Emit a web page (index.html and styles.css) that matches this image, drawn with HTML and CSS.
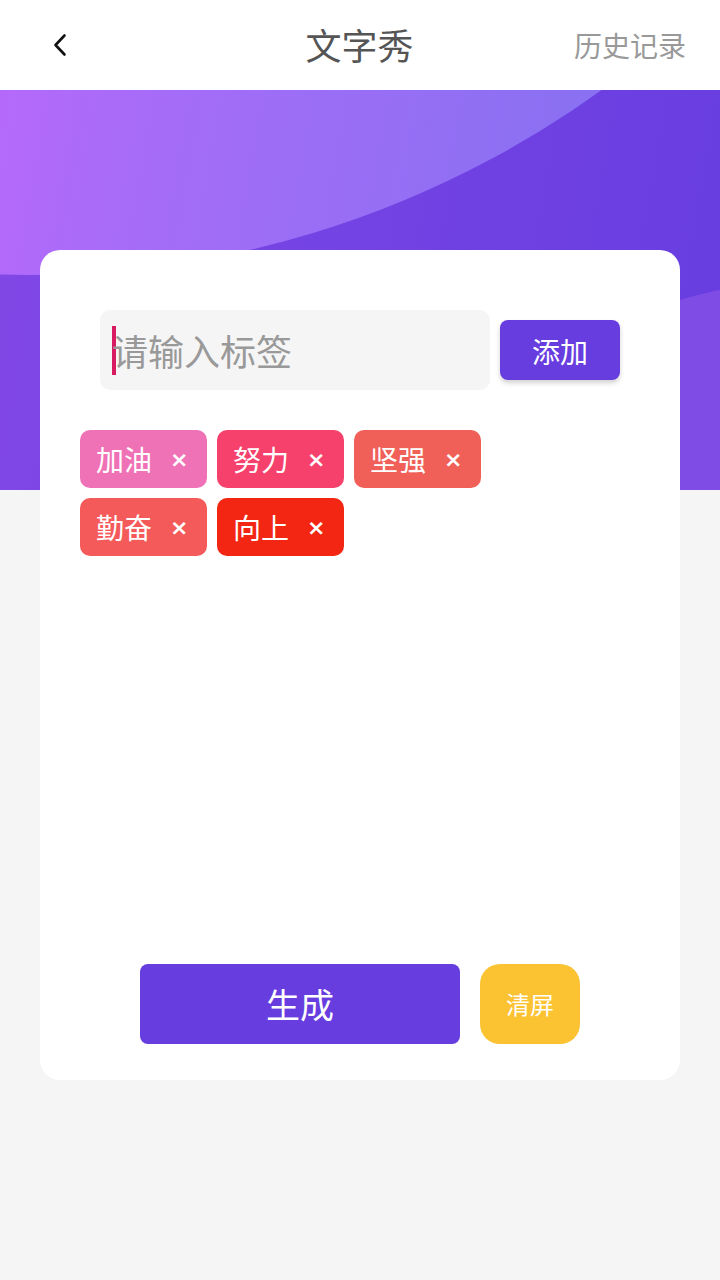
FILE: index.html
```html
<!DOCTYPE html>
<html lang="zh">
<head>
<meta charset="utf-8">
<title>文字秀</title>
<link rel="stylesheet" href="styles.css">
</head>
<body>
<header class="topbar">
  <div class="back">
    <svg width="24" height="24" viewBox="0 0 24 24"><path d="M15.5 2.5 L6.5 12 L15.5 21.5" fill="none" stroke="#111" stroke-width="2.6" stroke-linecap="round" stroke-linejoin="round"/></svg>
  </div>
  <div class="title">文字秀</div>
  <div class="history">历史记录</div>
</header>
<section class="hero">
  <div class="blob blob-a"></div>
  <div class="blob blob-b"></div>
</section>
<main class="card">
  <div class="input-row">
    <div class="input"><span class="caret"></span><span class="placeholder">请输入标签</span></div>
    <button class="add">添加</button>
  </div>
  <div class="tags">
    <div class="tag t1"><span class="tag-text">加油</span><span class="x">×</span></div>
    <div class="tag t2"><span class="tag-text">努力</span><span class="x">×</span></div>
    <div class="tag t3"><span class="tag-text">坚强</span><span class="x">×</span></div>
    <div class="tag t4"><span class="tag-text">勤奋</span><span class="x">×</span></div>
    <div class="tag t5"><span class="tag-text">向上</span><span class="x">×</span></div>
  </div>
  <div class="actions">
    <button class="gen">生成</button>
    <button class="clear">清屏</button>
  </div>
</main>
</body>
</html>
```
FILE: styles.css
```css
* { box-sizing: border-box; }
html, body { margin: 0; padding: 0; }
body {
  width: 720px;
  height: 1280px;
  background: #f5f5f5;
  font-family: "Noto Sans CJK SC", "Noto Sans", sans-serif;
  overflow: hidden;
}
.topbar {
  height: 90px;
  background: #fff;
  display: flex;
  align-items: center;
  position: relative;
  padding: 0 34px 0 49px;
}
.back { width: 24px; height: 24px; display: flex; }
.title {
  flex: 1;
  text-align: center;
  font-size: 36px;
  color: #555;
  line-height: 1;
  margin-left: 72px;
  padding-bottom: 2px;
}
.history {
  font-size: 28px;
  color: #999;
  line-height: 1;
}
.hero {
  height: 400px;
  position: relative;
  overflow: hidden;
  background: linear-gradient(100deg, #8248e6 0%, #7443e3 45%, #673de0 100%);
}
.blob { position: absolute; border-radius: 50%; }
.blob-a {
  width: 1950px;
  height: 1950px;
  left: -945px;
  top: -1765px;
  background: linear-gradient(100deg, #c466fc 48%, #a56cf8 62%, #8a70f2 80%);
}
.blob-b {
  width: 1660px;
  height: 1660px;
  left: 70px;
  top: 180px;
  background: #7f4ce6;
}
.card {
  position: relative;
  margin: -240px 40px 0;
  height: 830px;
  background: #fff;
  border-radius: 20px;
  padding: 60px 0 36px;
  display: flex;
  flex-direction: column;
}
.input-row {
  display: flex;
  align-items: center;
  gap: 10px;
  padding: 0 60px;
}
.input {
  width: 390px;
  height: 80px;
  background: #f5f5f5;
  border-radius: 10px;
  display: flex;
  align-items: center;
  padding-left: 12px;
}
.caret {
  width: 4px;
  height: 49px;
  background: #d81b60;
}
.placeholder {
  font-size: 36px;
  color: #999;
  line-height: 1;
  margin-left: -4px;
}
.add {
  width: 120px;
  height: 60px;
  border: none;
  border-radius: 8px;
  background: #673de0;
  color: #fff;
  font-family: inherit;
  font-size: 28px;
  line-height: 1;
  padding: 2px 0 0;
  box-shadow: 0 3px 5px rgba(0,0,0,0.18);
}
.tags {
  flex: 1;
  margin-top: 40px;
  padding: 0 150px 0 40px;
  display: flex;
  flex-wrap: wrap;
  align-content: flex-start;
  gap: 10px;
}
.tag {
  width: 127px;
  height: 58px;
  border-radius: 10px;
  display: flex;
  align-items: center;
  padding-left: 16px;
  color: #fff;
}
.tag-text { font-size: 28px; line-height: 1; }
.x {
  font-family: "DejaVu Sans", sans-serif;
  font-size: 22px;
  font-weight: bold;
  line-height: 1;
  margin-left: 18px;
  padding-top: 2px;
}
.t1 { background: #f072b6; }
.t2 { background: #f6416c; }
.t3 { background: #f06058; }
.t4 { background: #f55a5a; }
.t5 { background: #f22613; }
.actions {
  display: flex;
  justify-content: center;
  gap: 20px;
}
.gen {
  width: 320px;
  height: 80px;
  border: none;
  border-radius: 8px;
  background: #673de0;
  color: #fff;
  font-family: inherit;
  font-size: 34px;
  line-height: 1;
}
.clear {
  width: 100px;
  height: 80px;
  border: none;
  border-radius: 20px;
  background: #fbc232;
  color: #fff;
  font-family: inherit;
  font-size: 24px;
  line-height: 1;
}
```
